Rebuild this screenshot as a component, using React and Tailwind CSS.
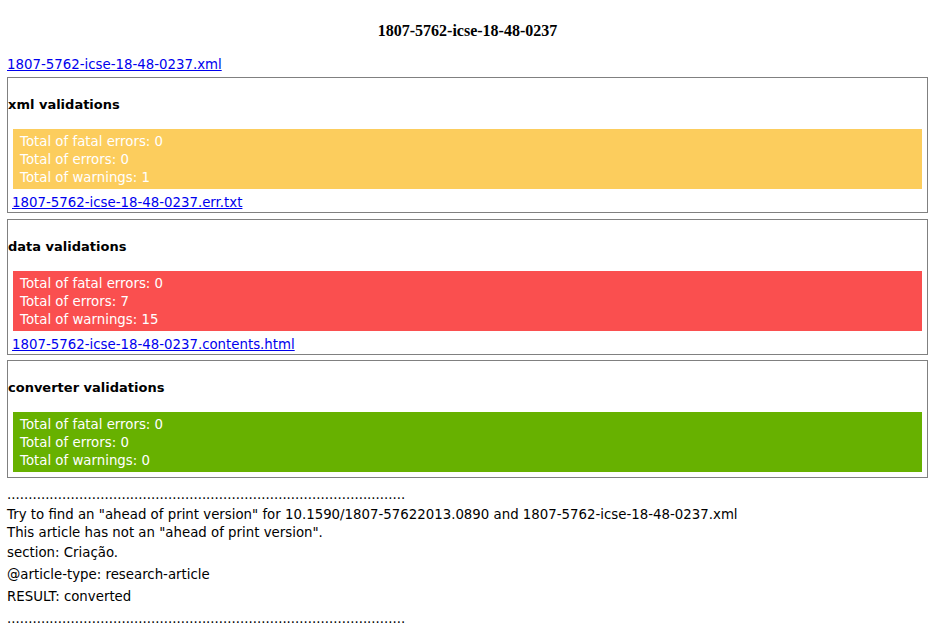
import React from "react";

const font = { fontFamily: '"DejaVu Sans", Verdana, sans-serif' };

function Box({ title, color, fatal, errors, warnings, link, className = "" }) {
  return (
    <div className={`border border-[#808080] bg-white ${className}`}>
      <div className="mt-[19px] mb-[16px] text-[13px] leading-[16px] font-bold text-black">
        {title}
      </div>
      <div className={`mx-[5px] mb-[5px] pt-[4px] pb-[2px] px-[7px] text-white leading-[18px] ${color}`}>
        <div>Total of fatal errors: {fatal}</div>
        <div>Total of errors: {errors}</div>
        <div>Total of warnings: {warnings}</div>
      </div>
      {link && (
        <div className="pl-[4px] leading-[18px]">
          <a href="#" className="text-[#0000ee] underline">
            {link}
          </a>
        </div>
      )}
    </div>
  );
}

export default function App() {
  const dots = ".".repeat(94);
  return (
    <div
      className="min-h-[638px] bg-white pt-[22px] pl-[7px] pr-[5px] text-[13.33px] text-black"
      style={font}
    >
      <h3
        className="h-[18px] text-center text-[16px] leading-[18px] font-bold"
        style={{ fontFamily: '"Liberation Serif", "Times New Roman", serif' }}
      >
        1807-5762-icse-18-48-0237
      </h3>
      <div className="mt-[16px] mb-[3px] leading-[18px]">
        <a href="#" className="text-[#0000ee] underline">
          1807-5762-icse-18-48-0237.xml
        </a>
      </div>
      <div className="flex flex-col">
        <Box
          title="xml validations"
          color="bg-[#fccd5d]"
          fatal="0"
          errors="0"
          warnings="1"
          link="1807-5762-icse-18-48-0237.err.txt"
        />
        <Box
          className="mt-[6px]"
          title="data validations"
          color="bg-[#fa4f4f]"
          fatal="0"
          errors="7"
          warnings="15"
          link="1807-5762-icse-18-48-0237.contents.html"
        />
        <Box
          className="mt-[5px]"
          title="converter validations"
          color="bg-[#67b100]"
          fatal="0"
          errors="0"
          warnings="0"
        />
      </div>
      <div className="mt-[8px] leading-[18px]">{dots}</div>
      <div className="mt-[2px] leading-[18px]">
        <div>
          Try to find an "ahead of print version" for 10.1590/1807-57622013.0890 and
          1807-5762-icse-18-48-0237.xml
        </div>
        <div>This article has not an "ahead of print version".</div>
      </div>
      <div className="mt-[2px] leading-[18px]">section: Criação.</div>
      <div className="mt-[4px] leading-[18px]">@article-type: research-article</div>
      <div className="mt-[4px] leading-[18px]">RESULT: converted</div>
      <div className="mt-[4px] leading-[18px]">{dots}</div>
    </div>
  );
}
